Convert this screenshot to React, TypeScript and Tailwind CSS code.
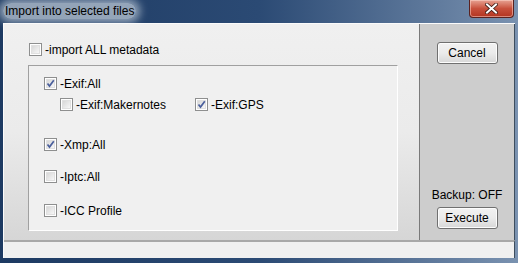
import React from "react";

type CheckProps = {
  label: string;
  checked?: boolean;
};

function CheckBox({ label, checked }: CheckProps) {
  return (
    <div className="flex items-center h-[13px]">
      <span className="relative w-[13px] h-[13px] border border-[#8e8f8f] bg-white p-[1px] shrink-0">
        <span className="block w-full h-full border border-[#e0e0e0] bg-gradient-to-br from-[#d8d8d8] to-[#f7f7f7]" />
        {checked && (
          <svg className="absolute left-[1px] top-[1px]" width="9" height="9" viewBox="0 0 9 9">
            <path d="M1.5 4.5 L3.5 7 L7.8 1.2" fill="none" stroke="#4a5f9c" strokeWidth="1.7" />
          </svg>
        )}
      </span>
      <span className="ml-[3px] text-[12px] leading-none text-black">{label}</span>
    </div>
  );
}

function WinButton({ label }: { label: string }) {
  return (
    <div className="w-[61px] h-[22px] rounded-[3px] border border-[#707070] bg-gradient-to-b from-[#f2f2f2] via-[#ebebeb] to-[#d7d7d7] flex items-center justify-center text-[12px] text-black shadow-[inset_0_0_0_1px_#fcfcfc]">
      {label}
    </div>
  );
}

export default function App() {
  return (
    <div
      className="w-[518px] h-[263px] bg-gradient-to-r from-[#1d3a62] via-[#2b4a74] to-[#7a92b0] flex flex-col overflow-hidden"
      style={{ fontFamily: '"Liberation Sans", Arial, sans-serif' }}
    >
      {/* title bar */}
      <div className="h-[23px] flex items-start justify-between shrink-0">
        <div className="ml-[3px] mt-[3px] px-[2px] h-[16px] text-[12px] leading-[16px] text-black rounded-[8px] bg-[#c4d0dc]/70 shadow-[0_0_8px_4px_rgba(196,208,220,0.7)]">
          Import into selected files
        </div>
        <div className="mr-[4px] w-[45px] h-[18px] rounded-b-[4px] border border-t-0 border-[#5a2220] bg-gradient-to-b from-[#e7a293] via-[#c8503c] to-[#b23420] flex items-center justify-center shadow-[inset_0_0_0_1px_rgba(255,220,210,0.5)]">
          <svg width="13" height="11" viewBox="0 0 13 11">
            <path d="M2 1.5 L11 9.5 M11 1.5 L2 9.5" stroke="#3b1a14" strokeWidth="3.6" strokeLinecap="square" />
            <path d="M2 1.5 L11 9.5 M11 1.5 L2 9.5" stroke="#ffffff" strokeWidth="2" strokeLinecap="square" />
          </svg>
        </div>
      </div>

      {/* client */}
      <div className="mx-[3px] flex-1 flex flex-col border-t border-l border-[#fbfbfb]">
        <div className="h-[216px] flex">
          {/* left panel */}
          <div className="w-[415px] bg-gradient-to-b from-[#f0f0f0] via-[#ebebeb] to-[#d6d6d6] flex flex-col pl-[24px] pt-[19px]">
            <div className="ml-[1px]">
              <CheckBox label="-import ALL metadata" />
            </div>
            <div className="mt-[9px] w-[370px] h-[166px] border-t border-l border-[#a0a0a0] border-b border-r border-b-white border-r-white bg-[#f0f0f0] flex flex-col pl-[15px] pt-[11px]">
              <CheckBox label="-Exif:All" checked />
              <div className="flex mt-[8px] ml-[16px]">
                <div className="w-[135px]">
                  <CheckBox label="-Exif:Makernotes" />
                </div>
                <CheckBox label="-Exif:GPS" checked />
              </div>
              <div className="mt-[27px]">
                <CheckBox label="-Xmp:All" checked />
              </div>
              <div className="mt-[19px]">
                <CheckBox label="-Iptc:All" />
              </div>
              <div className="mt-[21px]">
                <CheckBox label="-ICC Profile" />
              </div>
            </div>
          </div>
          {/* right panel */}
          <div className="flex-1 bg-[#cdcdcd] border-l border-[#7a7a7a] border-r border-r-[#3d4d5e] flex flex-col items-center pt-[18px] pb-[11px]">
            <WinButton label="Cancel" />
            <div className="flex-1" />
            <div className="text-[12px] leading-none text-black mb-[6px]">Backup: OFF</div>
            <WinButton label="Execute" />
          </div>
        </div>
        <div className="h-[18px] border-t-2 border-[#a8a8a8] bg-[#f0f0f0] border-r border-r-[#3d4d5e]" />
      </div>
      <div className="h-[5px] shrink-0" />
    </div>
  );
}
